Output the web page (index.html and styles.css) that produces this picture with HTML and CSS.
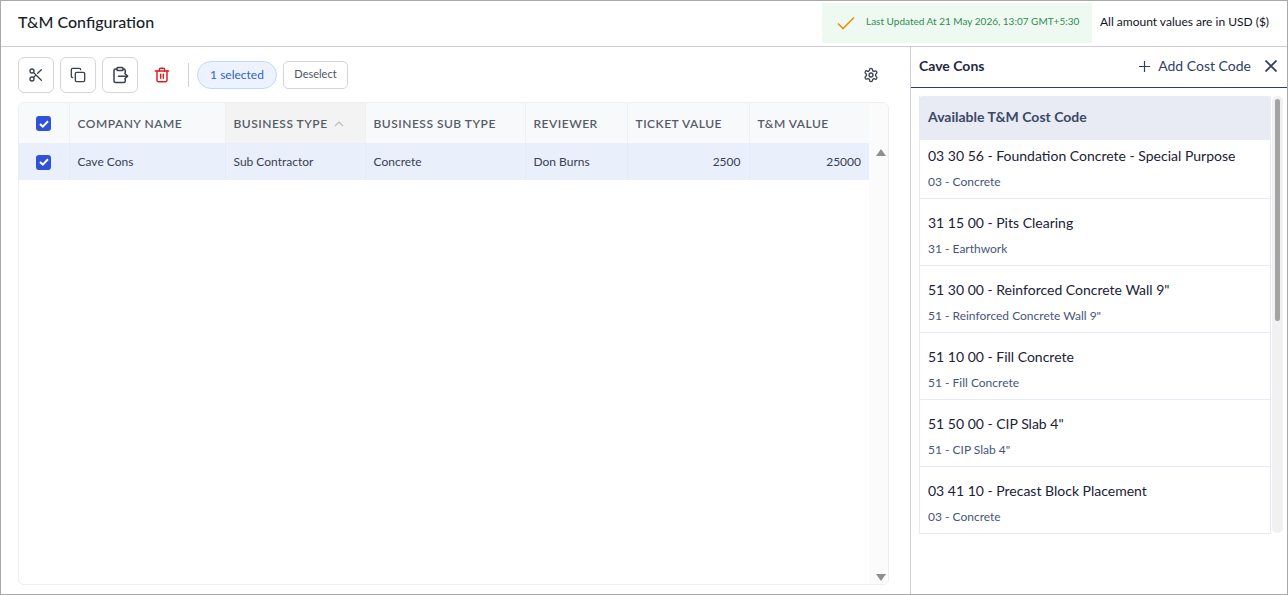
FILE: index.html
```html
<!DOCTYPE html>
<html lang="en">
<head>
    <meta charset="UTF-8">
    <meta name="viewport" content="width=device-width, initial-scale=1.0">
    <title>T&amp;M Configuration</title>
    <link rel="stylesheet" href="styles.css">
</head>
<body>
    <div class="app">
        <header class="top-bar">
            <h1>T&amp;M Configuration</h1>
            <div class="top-right">
                <div class="updated">
                    <svg width="18" height="14" viewBox="0 0 18 14" fill="none" stroke="#e8940c" stroke-width="1.7"><path d="M1 7.5 L6 12.5 L17 1.5"/></svg>
                    <span>Last Updated At 21 May 2026, 13:07 GMT+5:30</span>
                </div>
                <div class="currency">All amount values are in USD ($)</div>
            </div>
        </header>

        <div class="main">
            <section class="left">
                <div class="toolbar">
                    <button class="icon-btn" aria-label="Cut">
                        <svg width="16" height="16" viewBox="0 0 24 24" fill="none" stroke="#3a4150" stroke-width="2" stroke-linecap="round"><circle cx="6" cy="6" r="3"/><circle cx="6" cy="18" r="3"/><path d="M8.1 8.1 L20 20"/><path d="M14.5 9.5 L20 4"/><path d="M8.1 15.9 L11.5 12.5"/></svg>
                    </button>
                    <button class="icon-btn" aria-label="Copy">
                        <svg width="16" height="16" viewBox="0 0 24 24" fill="none" stroke="#3a4150" stroke-width="2" stroke-linecap="round" stroke-linejoin="round"><rect x="8" y="8" width="14" height="14" rx="2"/><path d="M4 16 C3 16 2 15 2 14 V4 C2 3 3 2 4 2 H14 C15 2 16 3 16 4"/></svg>
                    </button>
                    <button class="icon-btn" aria-label="Paste">
                        <svg width="18" height="18" viewBox="0 0 24 24" fill="none" stroke="#3a4150" stroke-width="2" stroke-linecap="round" stroke-linejoin="round"><rect x="8" y="2" width="8" height="4" rx="1"/><path d="M16 4 H17 C18.500 4 19 5 19 6 V9"/><path d="M8 4 H6 C5 4 4 5 4 6 V20 C4 21 5 22 6 22 H17 C18 22 19 21 19 20 V18"/><path d="M10 13.500 H22"/><path d="M18.500 10 L22 13.500 L18.500 17"/></svg>
                    </button>
                    <button class="trash-btn" aria-label="Delete">
                        <svg width="16" height="16" viewBox="0 0 24 24" fill="none" stroke="#d92020" stroke-width="2.200" stroke-linecap="round" stroke-linejoin="round"><path d="M2 6 H22"/><path d="M8 6 V4 C8 3 9 2 10 2 H14 C15 2 16 3 16 4 V6"/><path d="M4.500 6 V20 C4.500 21 5.500 22 6.500 22 H17.500 C18.500 22 19.500 21 19.500 20 V6"/><path d="M10 11 V17"/><path d="M14 11 V17"/></svg>
                    </button>
                    <span class="divider"></span>
                    <span class="selected-pill">1 selected</span>
                    <button class="deselect">Deselect</button>
                    <button class="gear" aria-label="Settings">
                        <svg width="16" height="16" viewBox="0 0 24 24" fill="none" stroke="#3a4150" stroke-width="2" stroke-linecap="round" stroke-linejoin="round"><circle cx="12" cy="12" r="3"/><path d="M12.200 2 H11.800 A2 2 0 0 0 9.800 4 V4.200 A2 2 0 0 1 8.800 5.900 L8.400 6.100 A2 2 0 0 1 6.400 6.100 L6.300 6 A2 2 0 0 0 3.600 6.700 L3.400 7.100 A2 2 0 0 0 4.100 9.800 L4.200 9.900 A2 2 0 0 1 5.200 11.600 V12.100 A2 2 0 0 1 4.200 13.900 L4.100 14 A2 2 0 0 0 3.400 16.700 L3.600 17.100 A2 2 0 0 0 6.300 17.800 L6.400 17.700 A2 2 0 0 1 8.400 17.700 L8.800 17.900 A2 2 0 0 1 9.800 19.600 V20 A2 2 0 0 0 11.800 22 H12.200 A2 2 0 0 0 14.200 20 V19.800 A2 2 0 0 1 15.200 18.100 L15.600 17.900 A2 2 0 0 1 17.600 17.900 L17.700 18 A2 2 0 0 0 20.400 17.300 L20.600 16.900 A2 2 0 0 0 19.900 14.200 L19.800 14.100 A2 2 0 0 1 18.800 12.400 V11.900 A2 2 0 0 1 19.800 10.100 L19.900 10 A2 2 0 0 0 20.600 7.300 L20.400 6.900 A2 2 0 0 0 17.700 6.200 L17.600 6.300 A2 2 0 0 1 15.600 6.300 L15.200 6.100 A2 2 0 0 1 14.200 4.400 V4 A2 2 0 0 0 12.200 2 Z"/></svg>
                    </button>
                </div>

                <div class="grid-wrap">
                    <div class="grid-scroll">
                        <table class="grid">
                            <colgroup>
                                <col class="c-check"><col class="c-company"><col class="c-type"><col class="c-sub"><col class="c-review"><col class="c-ticket"><col class="c-tm">
                            </colgroup>
                            <thead>
                                <tr>
                                    <th class="check-cell"><span class="check"><svg width="10" height="8" viewBox="0 0 10 8" fill="none" stroke="#fff" stroke-width="2"><path d="M1 4 L3.800 6.600 L9 1.200"/></svg></span></th>
                                    <th>COMPANY NAME</th>
                                    <th class="sorted">BUSINESS TYPE <svg class="sort" width="10" height="6" viewBox="0 0 10 6" fill="none" stroke="#b9bcc2" stroke-width="1.200"><path d="M1 5 L5 1 L9 5"/></svg></th>
                                    <th>BUSINESS SUB TYPE</th>
                                    <th>REVIEWER</th>
                                    <th>TICKET VALUE</th>
                                    <th>T&amp;M VALUE</th>
                                </tr>
                            </thead>
                            <tbody>
                                <tr>
                                    <td class="check-cell"><span class="check"><svg width="10" height="8" viewBox="0 0 10 8" fill="none" stroke="#fff" stroke-width="2"><path d="M1 4 L3.800 6.600 L9 1.200"/></svg></span></td>
                                    <td>Cave Cons</td>
                                    <td>Sub Contractor</td>
                                    <td>Concrete</td>
                                    <td>Don Burns</td>
                                    <td class="num">2500</td>
                                    <td class="num">25000</td>
                                </tr>
                            </tbody>
                        </table>
                    </div>
                    <div class="grid-bar">
                        <span class="arrow-up"></span>
                        <span class="arrow-down"></span>
                    </div>
                </div>
            </section>

            <aside class="panel">
                <div class="panel-head">
                    <h2>Cave Cons</h2>
                    <div class="panel-actions">
                        <svg width="11" height="11" viewBox="0 0 11 11" stroke="#2f3f63" stroke-width="1.200"><path d="M5.500 0 V11 M0 5.500 H11"/></svg>
                        <span class="add-label">Add Cost Code</span>
                        <svg class="close" width="12" height="12" viewBox="0 0 12 12" stroke="#2f3f63" stroke-width="1.800"><path d="M0.500 0.500 L11.500 11.500 M11.500 0.500 L0.500 11.500"/></svg>
                    </div>
                </div>
                <div class="panel-body">
                    <div class="codes">
                        <div class="codes-title">Available T&amp;M Cost Code</div>
                        <div class="code-item"><div class="code-name">03 30 56 - Foundation Concrete - Special Purpose</div><div class="code-group">03 - Concrete</div></div>
                        <div class="code-item"><div class="code-name">31 15 00 - Pits Clearing</div><div class="code-group">31 - Earthwork</div></div>
                        <div class="code-item"><div class="code-name">51 30 00 - Reinforced Concrete Wall 9"</div><div class="code-group">51 - Reinforced Concrete Wall 9"</div></div>
                        <div class="code-item"><div class="code-name">51 10 00 - Fill Concrete</div><div class="code-group">51 - Fill Concrete</div></div>
                        <div class="code-item"><div class="code-name">51 50 00 - CIP Slab 4"</div><div class="code-group">51 - CIP Slab 4"</div></div>
                        <div class="code-item"><div class="code-name">03 41 10 - Precast Block Placement</div><div class="code-group">03 - Concrete</div></div>
                    </div>
                    <div class="codes-bar"><div class="codes-thumb"></div></div>
                </div>
            </aside>
        </div>
    </div>
</body>
</html>
```

FILE: styles.css
```css
* {
    box-sizing: border-box;
}
html, body {
    height: 100%;
}
body {
    margin: 0;
    font-family: Lato, "Noto Sans", sans-serif;
    color: #333b4a;
    background: white;
    overflow: hidden;
}
button {
    font-family: inherit;
    cursor: pointer;
}
.app {
    height: 595px;
    border: 1px solid #a9a9a9;
    display: flex;
    flex-direction: column;
}
.top-bar {
    height: 46px;
    flex: none;
    display: flex;
    justify-content: space-between;
    border-bottom: 1px solid #ccced3;
    padding-left: 17px;
}
h1 {
    margin: 0;
    font-size: 16px;
    font-weight: 500;
    line-height: 41px;
    color: #1a1f2b;
}
.top-right {
    display: flex;
    padding-top: 2px;
}
.updated {
    width: 270px;
    height: 40px;
    background: #eefaf1;
    display: flex;
    align-items: center;
    gap: 11px;
    padding-left: 15px;
    font-size: 10px;
    color: #2f8a52;
}
.updated span {
    margin-top: -4px;
}
.currency {
    width: 195px;
    padding-left: 8px;
    font-size: 12px;
    line-height: 38px;
    color: #10141f;
}
.main {
    flex: 1;
    display: flex;
    min-height: 0;
}
.left {
    width: 910px;
    flex: none;
    border-right: 1px solid #ccced3;
    padding: 10px 21px 9px 17px;
    display: flex;
    flex-direction: column;
}
.toolbar {
    height: 36px;
    flex: none;
    display: flex;
    align-items: center;
    margin-bottom: 9px;
}
.icon-btn {
    width: 36px;
    height: 36px;
    margin-right: 6px;
    padding: 0;
    background: white;
    border: 1px solid #d3d5da;
    border-radius: 6px;
    display: flex;
    align-items: center;
    justify-content: center;
}
.trash-btn {
    width: 16px;
    height: 16px;
    margin-left: 10px;
    padding: 0;
    border: none;
    background: none;
    display: flex;
}
.divider {
    width: 1px;
    height: 24px;
    background: #ccd2dc;
    margin-left: 18px;
    margin-right: 8px;
}
.selected-pill {
    width: 80px;
    height: 28px;
    border: 1px solid #c5d8f7;
    border-radius: 14px;
    background: #ecf3fe;
    color: #2f5fd0;
    font-size: 12px;
    line-height: 26px;
    text-align: center;
}
.deselect {
    width: 65px;
    height: 28px;
    margin-left: 6px;
    padding: 0 0 3px;
    background: white;
    border: 1px solid #d3d5da;
    border-radius: 5px;
    color: #4b5364;
    font-size: 11px;
}
.gear {
    margin-left: auto;
    margin-right: 10px;
    width: 16px;
    height: 16px;
    padding: 0;
    border: none;
    background: none;
    display: flex;
}
.grid-wrap {
    flex: 1;
    display: flex;
    min-height: 0;
    border: 1px solid #eceef1;
    border-radius: 6px;
    width: 871px;
    overflow: hidden;
}
.grid-scroll {
    width: 850px;
    flex: none;
}
.grid {
    width: 850px;
    table-layout: fixed;
    border-collapse: collapse;
}
.c-check { width: 50px; }
.c-company { width: 156px; }
.c-type { width: 140px; }
.c-sub { width: 160px; }
.c-review { width: 102px; }
.c-ticket { width: 122px; }
.c-tm { width: 120px; }
th {
    height: 40px;
    padding: 0 8px;
    background: #f8f9fb;
    border-right: 1px solid #eff0f3;
    color: #555c69;
    font-size: 12px;
    font-weight: 600;
    letter-spacing: 0.5px;
    text-align: left;
    white-space: nowrap;
}
th:last-child, td:last-child {
    border-right: none;
}
th.sorted {
    background: #f3f3f4;
}
.sort {
    margin-left: 3px;
    vertical-align: 1px;
}
td {
    height: 37px;
    padding: 0 8px;
    background: #e9f0fc;
    border-right: 1px solid #e4ebf7;
    color: #3a4150;
    font-size: 12px;
}
td.num {
    text-align: right;
}
.check-cell {
    padding: 0;
    text-align: center;
}
.check {
    width: 15px;
    height: 15px;
    border-radius: 3px;
    background: #2f52d6;
    display: inline-flex;
    align-items: center;
    justify-content: center;
    vertical-align: middle;
}
.grid-bar {
    flex: 1;
    display: flex;
    flex-direction: column;
    justify-content: space-between;
    align-items: center;
    padding: 46px 0 3px 4px;
    background: #fbfbfb;
}
.arrow-up, .arrow-down {
    width: 0;
    height: 0;
    border-left: 5px solid transparent;
    border-right: 5px solid transparent;
}
.arrow-up {
    border-bottom: 7px solid #8f8f8f;
}
.arrow-down {
    border-top: 7px solid #8f8f8f;
}
.panel {
    flex: 1;
    display: flex;
    flex-direction: column;
    min-width: 0;
}
.panel-head {
    height: 41px;
    flex: none;
    border-bottom: 1px solid #2f3f63;
    display: flex;
    align-items: center;
    justify-content: space-between;
    padding: 0 10px 4px 8px;
}
h2 {
    margin: 0;
    font-size: 14px;
    font-weight: 700;
    color: #1f2a44;
}
.panel-actions {
    display: flex;
    align-items: center;
    color: #2f3f63;
}
.panel-actions svg {
    margin-top: 2px;
}
.add-label {
    font-size: 14px;
    margin-left: 8px;
}
.close {
    margin-left: 14px;
}
.panel-body {
    display: flex;
    padding: 8px 4px 0 8px;
}
.codes {
    width: 352px;
    flex: none;
    border-left: 1px solid #e6ebf3;
    border-right: 1px solid #e6ebf3;
}
.codes-title {
    height: 44px;
    margin: 0 -1px;
    padding: 0 9px;
    background: #e8ebf3;
    border-radius: 4px 4px 0 0;
    color: #3b4868;
    font-size: 14px;
    font-weight: 700;
    line-height: 42px;
}
.code-item {
    height: 67px;
    padding: 15px 8px 0;
    border-bottom: 1px solid #e6ebf3;
}
.codes-title + .code-item {
    height: 59px;
    padding-top: 7px;
}
.code-name {
    font-size: 14px;
    line-height: 18px;
    color: #1a2236;
}
.code-group {
    margin-top: 9px;
    font-size: 12px;
    line-height: 15px;
    color: #46567c;
}
.codes-bar {
    width: 12px;
    margin-left: 1px;
    height: 437px;
    background: #f1f1f2;
    border-radius: 5px;
    padding: 3px 3px 0;
}
.codes-thumb {
    height: 222px;
    background: #a3a3a3;
    border-radius: 3px;
}
```
